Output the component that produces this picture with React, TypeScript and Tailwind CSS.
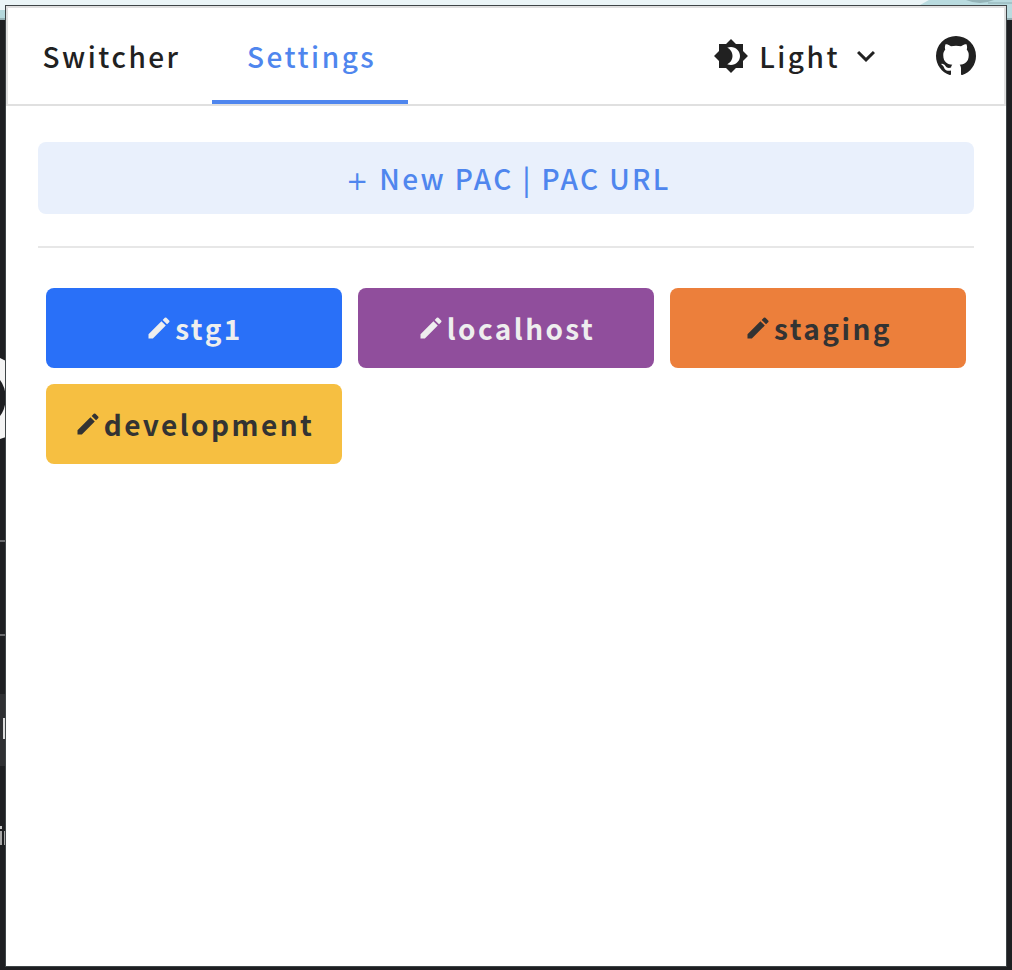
import { MdBrightness4, MdEdit, MdExpandMore } from "react-icons/md";

const profiles = [
  { name: "stg1", tone: "bg-[#2970f8] text-[#eeeeee]" },
  { name: "localhost", tone: "bg-[#904e9c] text-[#eeeeee]" },
  { name: "staging", tone: "bg-[#ec7f3b] text-[#333333]" },
  { name: "development", tone: "bg-[#f6bf41] text-[#333333]" },
];

function GithubMark() {
  return (
    <svg viewBox="0 0 24 24" className="size-12" fill="currentColor">
      <path d="M12,2A10,10 0 0,0 2,12C2,16.42 4.87,20.17 8.84,21.5C9.34,21.58 9.5,21.27 9.5,21C9.5,20.77 9.5,20.14 9.5,19.31C6.73,19.91 6.14,17.97 6.14,17.97C5.68,16.81 5.03,16.5 5.03,16.5C4.12,15.88 5.1,15.9 5.1,15.9C6.1,15.97 6.63,16.93 6.63,16.93C7.5,18.45 8.97,18 9.54,17.76C9.63,17.11 9.89,16.67 10.17,16.42C7.95,16.17 5.62,15.31 5.62,11.5C5.62,10.39 6,9.5 6.65,8.79C6.55,8.54 6.2,7.5 6.75,6.15C6.75,6.15 7.59,5.88 9.5,7.17C10.29,6.95 11.15,6.84 12,6.84C12.85,6.84 13.71,6.95 14.5,7.17C16.41,5.88 17.25,6.15 17.25,6.15C17.8,7.5 17.45,8.54 17.35,8.79C18,9.5 18.38,10.39 18.38,11.5C18.38,15.32 16.04,16.16 13.81,16.41C14.17,16.72 14.5,17.33 14.5,18.26C14.5,19.6 14.5,20.68 14.5,21C14.5,21.27 14.66,21.59 15.17,21.5C19.14,20.16 22,16.42 22,12A10,10 0 0,0 12,2Z" />
    </svg>
  );
}

function Backdrop() {
  return (
    <svg className="absolute inset-0" width="1012" height="970" viewBox="0 0 1012 970">
      <rect width="1012" height="970" fill="#1e1f22" />
      <rect width="1012" height="10" fill="#ebf5f7" />
      <rect y="10" width="6" height="8" fill="#b5d8dc" />
      <rect y="18" width="6" height="2" fill="#93afb3" />
      <path d="M920 5 L929 0 H1012 V18 H1006 V5 Z" fill="#b9dbdf" />
      <rect x="1006" y="18" width="6" height="2" fill="#93afb3" />
      <path d="M966 0 Q980 6 994 0 Z" fill="#94b3b7" />
      <rect x="988" y="2" width="24" height="2" fill="#a3c4c8" />
      <path d="M0 358 L6 361 V437 L0 439 Z" fill="#f4f4f4" />
      <path d="M0 380 Q5 386 6 398 Q5 410 0 416 Z" fill="#1e1f22" />
      <rect y="540" width="6" height="2" fill="#6a6b6e" />
      <rect y="634" width="6" height="2" fill="#6a6b6e" />
      <rect y="694" width="6" height="72" fill="#2f3033" />
      <rect x="3" y="718" width="2" height="21" fill="#dddddd" />
      <rect y="826" width="2" height="3" fill="#c8c8c8" />
      <rect y="831" width="2" height="14" fill="#a8a8a8" />
      <rect x="4" y="831" width="1" height="14" fill="#a8a8a8" />
    </svg>
  );
}

export default function App() {
  return (
    <div className="relative h-[970px] w-[1012px] overflow-hidden px-[5px] pt-[5px] font-['Noto_Sans_CJK_JP',sans-serif] text-[28px] font-medium tracking-[2.5px] text-[#212121]">
      <Backdrop />
      <div className="relative h-[962px] border border-[#3f4547] bg-white">
        <header className="flex h-[100px] items-stretch border-2 border-[#e0e0e0]">
          <nav className="flex">
            <button className="flex w-[204px] items-center pl-[34.5px]">Switcher</button>
            <button className="flex w-[196px] items-center border-b-4 border-[#4f86ee] pt-1 pl-[35px] text-[#4f86ee]">
              Settings
            </button>
          </nav>
          <button className="ml-auto flex items-center">
            <MdBrightness4 className="mr-2.5 size-9" />
            Light
            <MdExpandMore className="ml-2 size-9" />
          </button>
          <a className="mr-6 ml-12 flex items-center">
            <GithubMark />
          </a>
        </header>
        <main className="px-8 pt-9">
          <button className="flex h-[72px] w-full items-baseline justify-center rounded-lg bg-[#e9f0fc] pt-[15px] pl-[5px] tracking-[2.4px] text-[#4f86ee]">
            <span className="mr-[9px] font-['DejaVu_Sans',sans-serif] text-[26px] leading-none font-normal">+</span>
            <span>New PAC | PAC URL</span>
          </button>
          <hr className="mt-8 border-t-2 border-[#e7e7e7]" />
          <div className="mt-10 grid grid-cols-3 gap-4 px-2 tracking-[2.45px]">
            {profiles.map((p) => (
              <button key={p.name} className={"flex h-20 items-center justify-center rounded-lg font-bold " + p.tone}>
                <MdEdit className="mr-0.5 size-7" />
                {p.name}
              </button>
            ))}
          </div>
        </main>
      </div>
    </div>
  );
}
